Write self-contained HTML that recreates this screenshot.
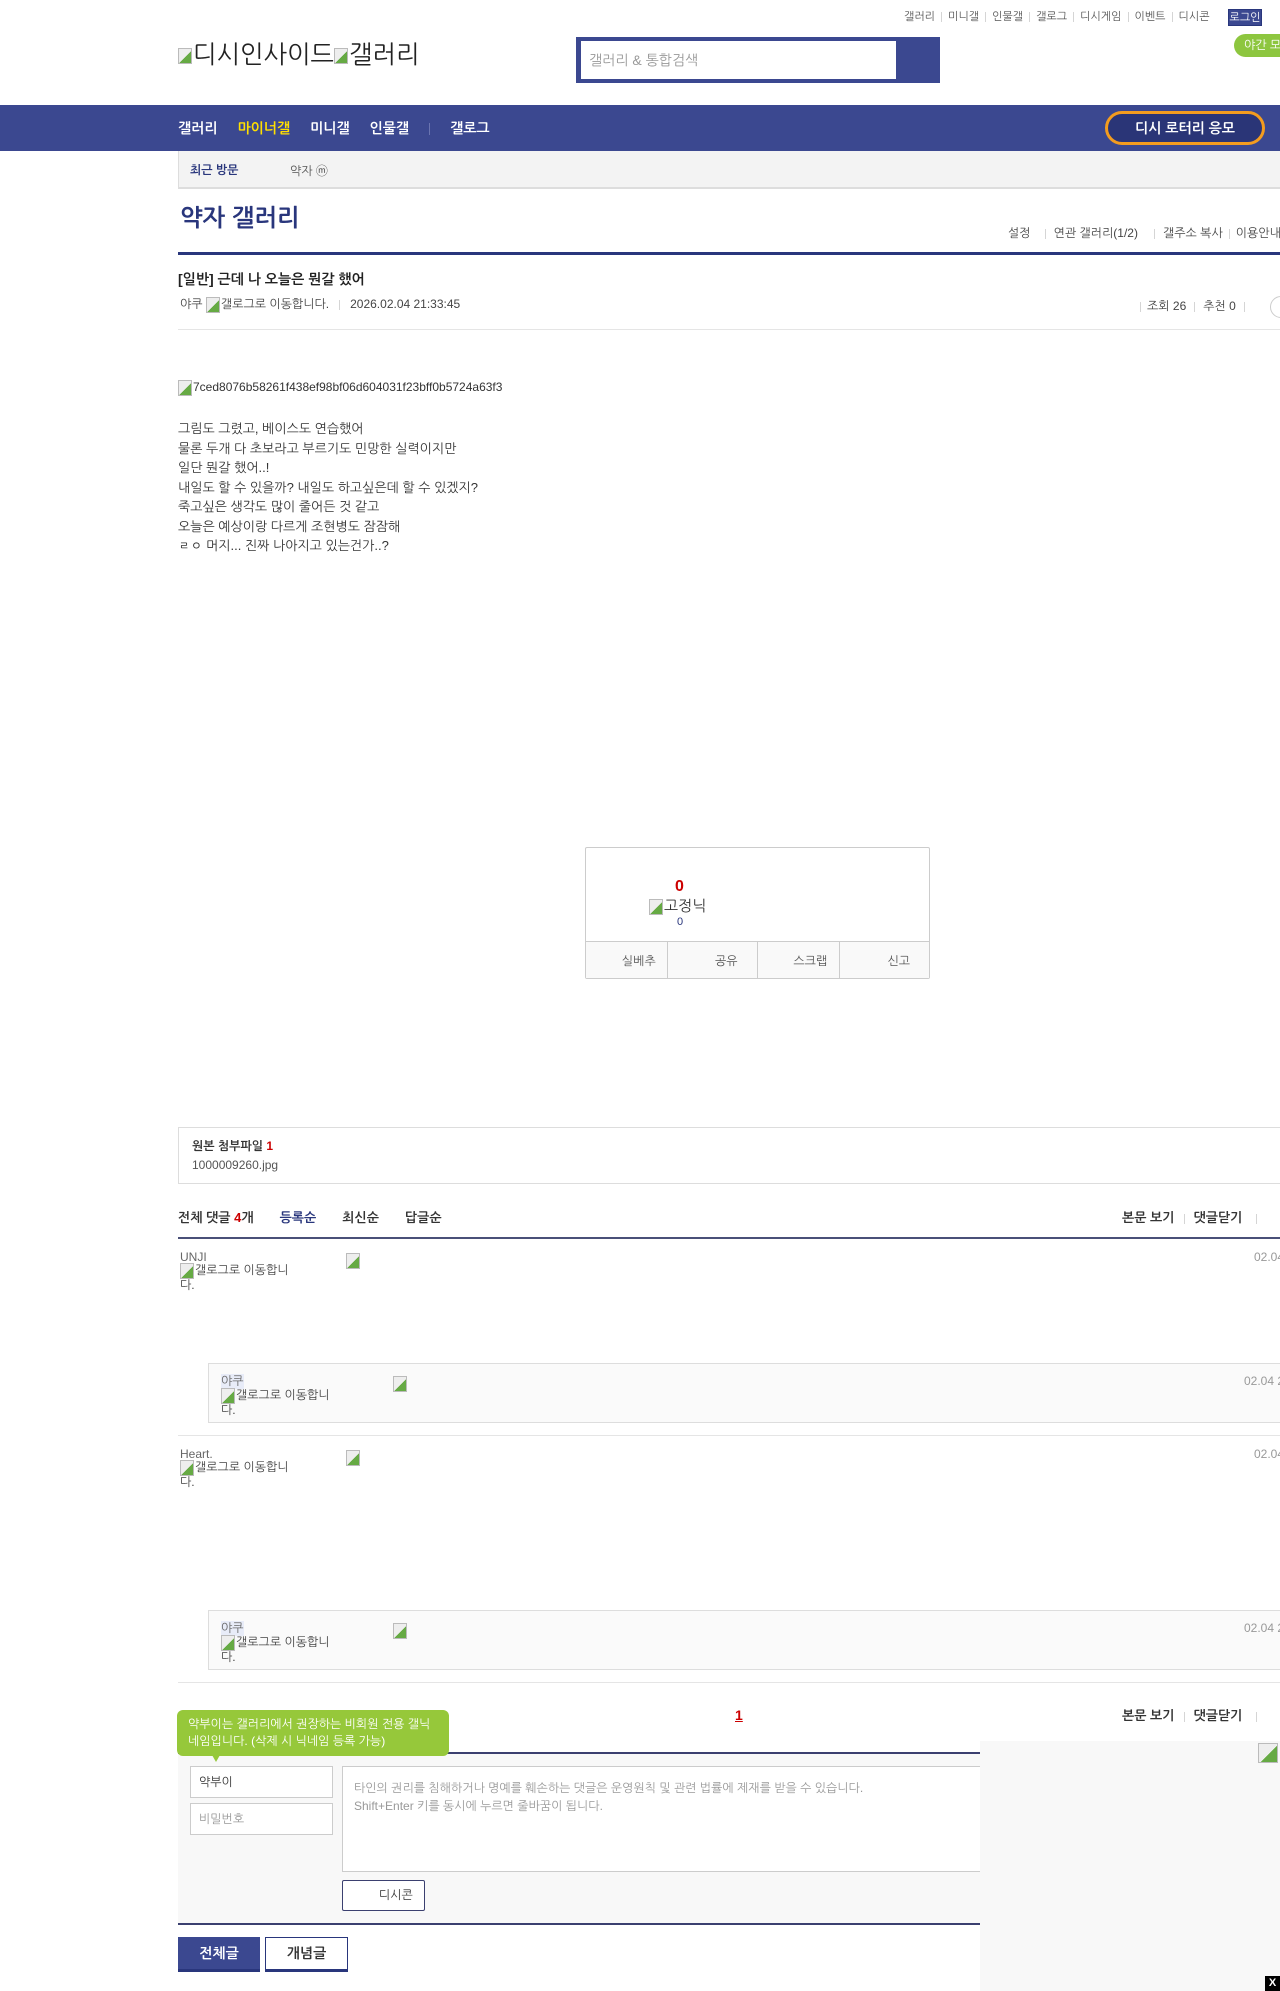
<!DOCTYPE html>
<html><head><meta charset="utf-8"><style>
*{margin:0;padding:0;box-sizing:border-box}
body{width:1280px;height:1991px;position:relative;overflow:hidden;background:#fff;font-family:"Liberation Sans","NanumGothic","Noto Sans CJK KR",sans-serif;color:#333;font-size:13px}
.a{position:absolute;white-space:nowrap}
.sep{display:inline-block;width:1px;height:10px;background:#d5d5d5;margin:0 6px;vertical-align:middle}
.bi{display:inline-block;width:14px;height:16px;border:1px solid #bbb;background:linear-gradient(135deg,#eee 55%,#6a4 55%);vertical-align:middle;margin-right:1px}
.nk{font-size:12px;color:#444;line-height:13px;white-space:normal;width:122px;text-align:left}
</style></head><body>
<div class="a" style="top:10px;left:904px;font-size:11px;color:#555">갤러리<span class="sep"></span>미니갤<span class="sep"></span>인물갤<span class="sep"></span>갤로그<span class="sep"></span>디시게임<span class="sep"></span>이벤트<span class="sep"></span>디시콘</div>
<div class="a" style="top:9px;left:1228px;width:34px;height:17px;background:#3b4890;color:#fff;font-size:11px;text-align:center;line-height:17px;border:1px solid #29367c">로그인</div>
<div class="a" style="top:34px;left:1234px;width:60px;height:23px;background:#8dc63f;border-radius:12px;color:#fff;font-size:12px;line-height:23px;padding-left:10px">야간 모드</div>
<div class="a" style="top:39px;left:178px;font-size:25px;color:#222"><span class="bi"></span>디시인사이드<span class="bi"></span>갤러리</div>
<div class="a" style="top:37px;left:576px;width:364px;height:46px;background:#3b4890"></div>
<div class="a" style="top:41px;left:581px;width:315px;height:38px;background:#fff;font-size:14px;color:#999;line-height:38px;padding-left:8px">갤러리 &amp; 통합검색</div>
<div class="a" style="top:105px;left:0;width:1280px;height:46px;background:#3b4890"></div>
<div class="a" style="top:120px;left:178px;font-size:14px;font-weight:bold;color:#fff">갤러리<span style="color:#ffdf00;margin-left:20px">마이너갤</span><span style="margin-left:20px">미니갤</span><span style="margin-left:20px">인물갤</span><span style="display:inline-block;width:1px;height:12px;background:#6a74b0;margin:0 20px;vertical-align:middle"></span>갤로그</div>
<div class="a" style="top:111px;left:1105px;width:160px;height:34px;border:3px solid #f39c1f;border-radius:17px;background:#2a3577;color:#fff;font-size:14px;font-weight:bold;text-align:center;line-height:28px">디시 로터리 응모</div>
<div class="a" style="top:151px;left:178px;width:1110px;height:38px;background:#f3f3f3;border:1px solid #ddd;border-top:none;border-bottom:2px solid #ddd"></div>
<div class="a" style="top:163px;left:190px;font-size:12px;font-weight:bold;color:#29367c">최근 방문</div>
<div class="a" style="top:162px;left:290px;font-size:12px;color:#555">약자 ⓜ</div>
<div class="a" style="top:205px;left:180px;font-size:24px;font-weight:bold;color:#29367c">약자 갤러리</div>
<div class="a" style="top:226px;left:1008px;font-size:12px;color:#444">설정<span class="sep" style="margin:0 8px 0 14px"></span>연관 갤러리(1/2)<span class="sep" style="margin:0 8px 0 16px"></span>갤주소 복사<span class="sep"></span>이용안내</div>
<div class="a" style="top:252px;left:178px;width:1110px;height:3px;background:#29367c"></div>
<div class="a" style="top:271px;left:178px;font-size:14px;font-weight:bold;color:#222">[일반] 근데 나 오늘은 뭔갈 했어</div>
<div class="a" style="top:297px;left:180px;font-size:12px;color:#444">야쿠 <span class="bi"></span>갤로그로 이동합니다.<span class="sep" style="margin:0 10px"></span>2026.02.04 21:33:45</div>
<div class="a" style="top:299px;left:1134px;font-size:12px;color:#444"><span class="sep"></span>조회 26<span class="sep" style="margin:0 8px"></span>추천 0<span class="sep" style="margin:0 8px"></span></div>
<div class="a" style="top:296px;left:1270px;width:22px;height:22px;border:1px solid #ccc;border-radius:11px"></div>
<div class="a" style="top:329px;left:178px;width:1110px;height:1px;background:#e5e5e5"></div>
<div class="a" style="top:380px;left:178px;font-size:12px;color:#333"><span class="bi"></span>7ced8076b58261f438ef98bf06d604031f23bff0b5724a63f3</div>
<div class="a" style="top:419px;left:178px;font-size:13px;line-height:19.5px;color:#333;white-space:pre">그림도 그렸고, 베이스도 연습했어
물론 두개 다 초보라고 부르기도 민망한 실력이지만
일단 뭔갈 했어..!
내일도 할 수 있을까? 내일도 하고싶은데 할 수 있겠지?
죽고싶은 생각도 많이 줄어든 것 같고
오늘은 예상이랑 다르게 조현병도 잠잠해
ㄹㅇ 머지... 진짜 나아지고 있는건가..?</div>
<div class="a" style="top:847px;left:585px;width:345px;height:132px;border:1px solid #ccc;border-radius:2px"></div>
<div class="a" style="top:878px;left:675px;font-size:16px;font-weight:bold;color:#c00">0</div>
<div class="a" style="top:897px;left:649px;font-size:15px;color:#333"><span class="bi"></span>고정닉</div>
<div class="a" style="top:916px;left:677px;font-size:11px;color:#29367c">0</div>
<div class="a" style="top:941px;left:586px;width:343px;height:37px;background:#f9f9f9;border-top:1px solid #ccc;display:flex;font-size:12px;color:#555">
<div style="flex:1;border-right:1px solid #ccc;text-align:right;padding:12px 11px 0 0">실베추</div>
<div style="flex:1;border-right:1px solid #ccc;text-align:right;padding:12px 19px 0 0">공유</div>
<div style="flex:1;border-right:1px solid #ccc;text-align:right;padding:12px 12px 0 0">스크랩</div>
<div style="flex:1;text-align:right;padding:12px 19px 0 0">신고</div></div>
<div class="a" style="top:1127px;left:178px;width:1110px;height:57px;border:1px solid #ddd"></div>
<div class="a" style="top:1139px;left:192px;font-size:12px;font-weight:bold;color:#333">원본 첨부파일 <span style="color:#c00">1</span></div>
<div class="a" style="top:1158px;left:192px;font-size:12px;color:#555">1000009260.jpg</div>
<div class="a" style="top:1210px;left:178px;font-size:13px;font-weight:bold;color:#333">전체 댓글 <span style="color:#c00">4</span>개<span style="color:#29367c;margin-left:26px">등록순</span><span style="margin-left:26px">최신순</span><span style="margin-left:26px">답글순</span></div>
<div class="a" style="top:1210px;left:1122px;font-size:13px;font-weight:bold;color:#333">본문 보기<span class="sep" style="margin:0 9px"></span>댓글닫기<span class="sep" style="margin:0 14px"></span></div>
<div class="a" style="top:1237px;left:178px;width:1110px;height:2px;background:#4a5078"></div>
<div class="a" style="top:1250px;left:180px;font-size:12px;color:#666">UNJI</div>
<div class="a nk" style="top:1263px;left:180px"><span class="bi"></span>갤로그로 이동합니다.</div>
<div class="a" style="top:1252px;left:346px"><span class="bi"></span></div>
<div class="a" style="top:1250px;left:1254px;font-size:12px;color:#999">02.04</div>
<div class="a" style="top:1363px;left:208px;width:1080px;height:60px;background:#fafafa;border:1px solid #ddd"></div>
<div class="a" style="top:1374px;left:221px;font-size:12px;color:#666;background:#e8ecf8">야쿠</div>
<div class="a nk" style="top:1388px;left:221px"><span class="bi"></span>갤로그로 이동합니다.</div>
<div class="a" style="top:1375px;left:393px"><span class="bi"></span></div>
<div class="a" style="top:1374px;left:1244px;font-size:12px;color:#999">02.04 2</div>
<div class="a" style="top:1435px;left:178px;width:1110px;height:1px;background:#e5e5e5"></div>
<div class="a" style="top:1447px;left:180px;font-size:12px;color:#666">Heart.</div>
<div class="a nk" style="top:1460px;left:180px"><span class="bi"></span>갤로그로 이동합니다.</div>
<div class="a" style="top:1449px;left:346px"><span class="bi"></span></div>
<div class="a" style="top:1447px;left:1254px;font-size:12px;color:#999">02.04</div>
<div class="a" style="top:1610px;left:208px;width:1080px;height:60px;background:#fafafa;border:1px solid #ddd"></div>
<div class="a" style="top:1621px;left:221px;font-size:12px;color:#666;background:#e8ecf8">야쿠</div>
<div class="a nk" style="top:1635px;left:221px"><span class="bi"></span>갤로그로 이동합니다.</div>
<div class="a" style="top:1622px;left:393px"><span class="bi"></span></div>
<div class="a" style="top:1621px;left:1244px;font-size:12px;color:#999">02.04 2</div>
<div class="a" style="top:1682px;left:178px;width:1110px;height:1px;background:#e5e5e5"></div>
<div class="a" style="top:1707px;left:735px;font-size:14px;font-weight:bold;color:#c00;text-decoration:underline">1</div>
<div class="a" style="top:1708px;left:1122px;font-size:13px;font-weight:bold;color:#333">본문 보기<span class="sep" style="margin:0 9px"></span>댓글닫기<span class="sep" style="margin:0 14px"></span></div>
<div class="a" style="top:1752px;left:178px;width:810px;height:173px;background:#f8f8f8;border-top:2px solid #3b4070;border-bottom:2px solid #3b4070"></div>
<div class="a" style="top:1710px;left:177px;width:272px;height:46px;background:#96c83a;border-radius:6px;color:#fff;font-size:12px;line-height:17px;padding:6px 11px;white-space:normal">약부이는 갤러리에서 권장하는 비회원 전용 갤닉네임입니다. (삭제 시 닉네임 등록 가능)</div>
<div class="a" style="top:1755px;left:212px;width:0;height:0;border-left:4px solid transparent;border-right:4px solid transparent;border-top:7px solid #96c83a"></div>
<div class="a" style="top:1766px;left:190px;width:143px;height:32px;background:#fff;border:1px solid #ccc;font-size:12px;color:#333;line-height:30px;padding-left:8px">약부이</div>
<div class="a" style="top:1803px;left:190px;width:143px;height:32px;background:#fff;border:1px solid #ccc;font-size:12px;color:#999;line-height:30px;padding-left:8px">비밀번호</div>
<div class="a" style="top:1766px;left:342px;width:650px;height:106px;background:#fff;border:1px solid #ccc;font-size:12px;color:#999;line-height:18px;padding:12px 11px">타인의 권리를 침해하거나 명예를 훼손하는 댓글은 운영원칙 및 관련 법률에 제재를 받을 수 있습니다.<br>Shift+Enter 키를 동시에 누르면 줄바꿈이 됩니다.</div>
<div class="a" style="top:1880px;left:342px;width:83px;height:31px;background:#fff;border:1px solid #3b4070;border-radius:2px;font-size:12px;color:#333;line-height:29px;padding-left:36px">디시콘</div>
<div class="a" style="top:1937px;left:178px;width:82px;height:35px;background:#3b4890;border-bottom:3px solid #29367c;color:#fff;font-size:14px;font-weight:bold;text-align:center;line-height:32px">전체글</div>
<div class="a" style="top:1937px;left:265px;width:83px;height:35px;background:#fff;border:1px solid #29367c;border-bottom:3px solid #29367c;color:#333;font-size:14px;font-weight:bold;text-align:center;line-height:30px">개념글</div>
<div class="a" style="top:1741px;left:980px;width:300px;height:250px;background:#f8f8f8"></div>
<div class="a" style="top:1743px;left:1258px"><span class="bi" style="width:20px;height:20px"></span></div>
<div class="a" style="top:1976px;left:1265px;width:15px;height:15px;background:#000;color:#fff;font-size:11px;font-weight:bold;text-align:center;line-height:15px">X</div>
</body></html>
